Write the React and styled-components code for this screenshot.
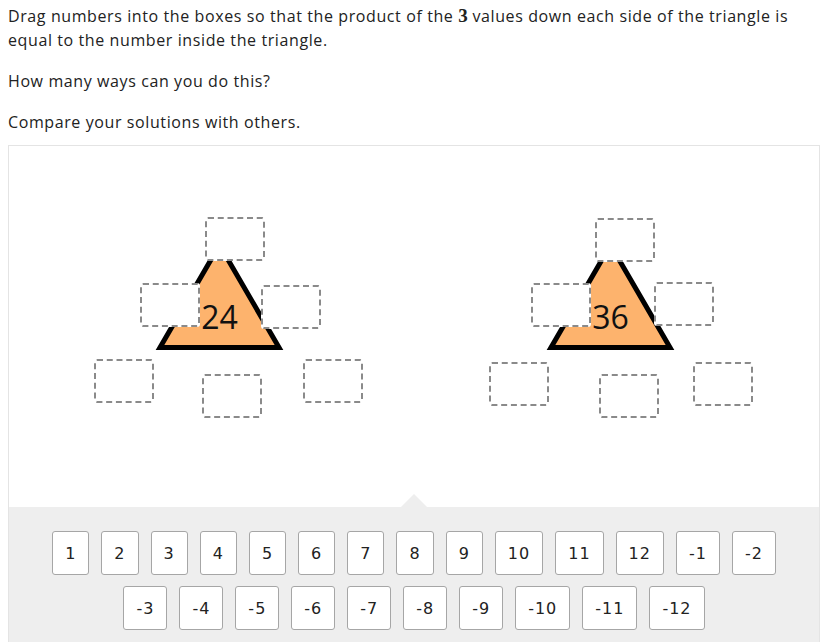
import React from "react";
import styled, { createGlobalStyle } from "styled-components";

const GlobalStyle = createGlobalStyle`
  html, body {
    margin: 0;
    padding: 0;
    background: #fff;
  }
  body {
    font-family: "Open Sans", Lato, sans-serif;
    color: #222;
  }
`;

const puzzles = [
  {
    value: 24,
    cx: 210.5,
    slots: [
      [196, 71],
      [131, 137],
      [252, 139],
      [85, 213],
      [193, 228],
      [294, 213],
    ],
  },
  {
    value: 36,
    cx: 196.5,
    slots: [
      [181, 72],
      [117, 137],
      [240, 136],
      [75, 216],
      [185, 228],
      [279, 216],
    ],
  },
];

const rows = [
  ["1", "2", "3", "4", "5", "6", "7", "8", "9", "10", "11", "12", "-1", "-2"],
  ["-3", "-4", "-5", "-6", "-7", "-8", "-9", "-10", "-11", "-12"],
];

export default function App() {
  return (
    <Page>
      <GlobalStyle />
      <Intro>
        <P>
          Drag numbers into the boxes so that the product of the <MathNum>3</MathNum> values
          down each side of the triangle is equal to the number inside the triangle.
        </P>
        <P>How many ways can you do this?</P>
        <P $last>Compare your solutions with others.</P>
      </Intro>
      <Panel>
        <Board>
          {puzzles.map((p) => (
            <Puzzle key={p.value}>
              <TriangleSvg width="405" height="361" viewBox="0 0 405 361">
                <polygon
                  points={`${p.cx},99 ${p.cx - 59.5},201.5 ${p.cx + 59.5},201.5`}
                  fill="#fdb36d"
                  stroke="#000"
                  strokeWidth="5"
                  strokeLinejoin="miter"
                />
              </TriangleSvg>
              <Target $x={p.cx}>{p.value}</Target>
              {p.slots.map(([x, y], i) => (
                <Slot key={i} $x={x} $y={y} />
              ))}
            </Puzzle>
          ))}
        </Board>
        <Tray>
          {rows.map((row, i) => (
            <TileRow key={i}>
              {row.map((n) => (
                <Tile key={n}>{n}</Tile>
              ))}
            </TileRow>
          ))}
        </Tray>
      </Panel>
    </Page>
  );
}

const Page = styled.div`
  padding: 4px 8px 0 8px;
  width: 837px;
  box-sizing: border-box;
  height: 642px;
  overflow: hidden;
`;

const Intro = styled.div`
  width: 812px;
`;

const P = styled.p`
  margin: 0 0 ${(p) => (p.$last ? "11px" : "17px")};
  font-size: 16px;
  line-height: 24px;
  letter-spacing: 0.6px;
  color: #222;
`;

const MathNum = styled.span`
  font-family: "Liberation Serif", "DejaVu Serif", serif;
  font-size: 19px;
  font-weight: 700;
  line-height: 1;
  letter-spacing: 0;
`;

const Panel = styled.div`
  border: 1px solid #e4e4e4;
  width: 812px;
  box-sizing: border-box;
`;

const Board = styled.div`
  display: flex;
  height: 361px;
  background: #fff;
`;

const Puzzle = styled.div`
  position: relative;
  flex: 1;
  height: 100%;
`;

const TriangleSvg = styled.svg`
  position: absolute;
  left: 0;
  top: 0;
  display: block;
`;

const Target = styled.span`
  position: absolute;
  left: ${(p) => p.$x - 40}px;
  top: 149px;
  width: 80px;
  text-align: center;
  font-family: "Open Sans", sans-serif;
  font-size: 32px;
  line-height: 44px;
  color: #111;
`;

const Slot = styled.div`
  position: absolute;
  left: ${(p) => p.$x}px;
  top: ${(p) => p.$y}px;
  width: 60px;
  height: 44px;
  box-sizing: border-box;
  border: 2px dashed #8a8a8a;
  border-radius: 3px;
  background: #fff;
`;

const Tray = styled.div`
  position: relative;
  background: #eeeeee;
  padding: 24px 0 14px;
  display: flex;
  flex-direction: column;
  gap: 11px;
  &::before {
    content: "";
    position: absolute;
    left: 50%;
    top: -13px;
    margin-left: -13px;
    border-left: 13px solid transparent;
    border-right: 13px solid transparent;
    border-bottom: 13px solid #eeeeee;
  }
`;

const TileRow = styled.div`
  display: flex;
  justify-content: center;
  gap: 12px;
`;

const Tile = styled.div`
  height: 44px;
  box-sizing: border-box;
  padding: 0 12px;
  display: flex;
  align-items: center;
  justify-content: center;
  background: #fff;
  border: 1px solid #a6a6a6;
  border-radius: 3px;
  font-family: "DejaVu Sans", Verdana, sans-serif;
  font-size: 16px;
  letter-spacing: 1px;
  color: #222;
`;
